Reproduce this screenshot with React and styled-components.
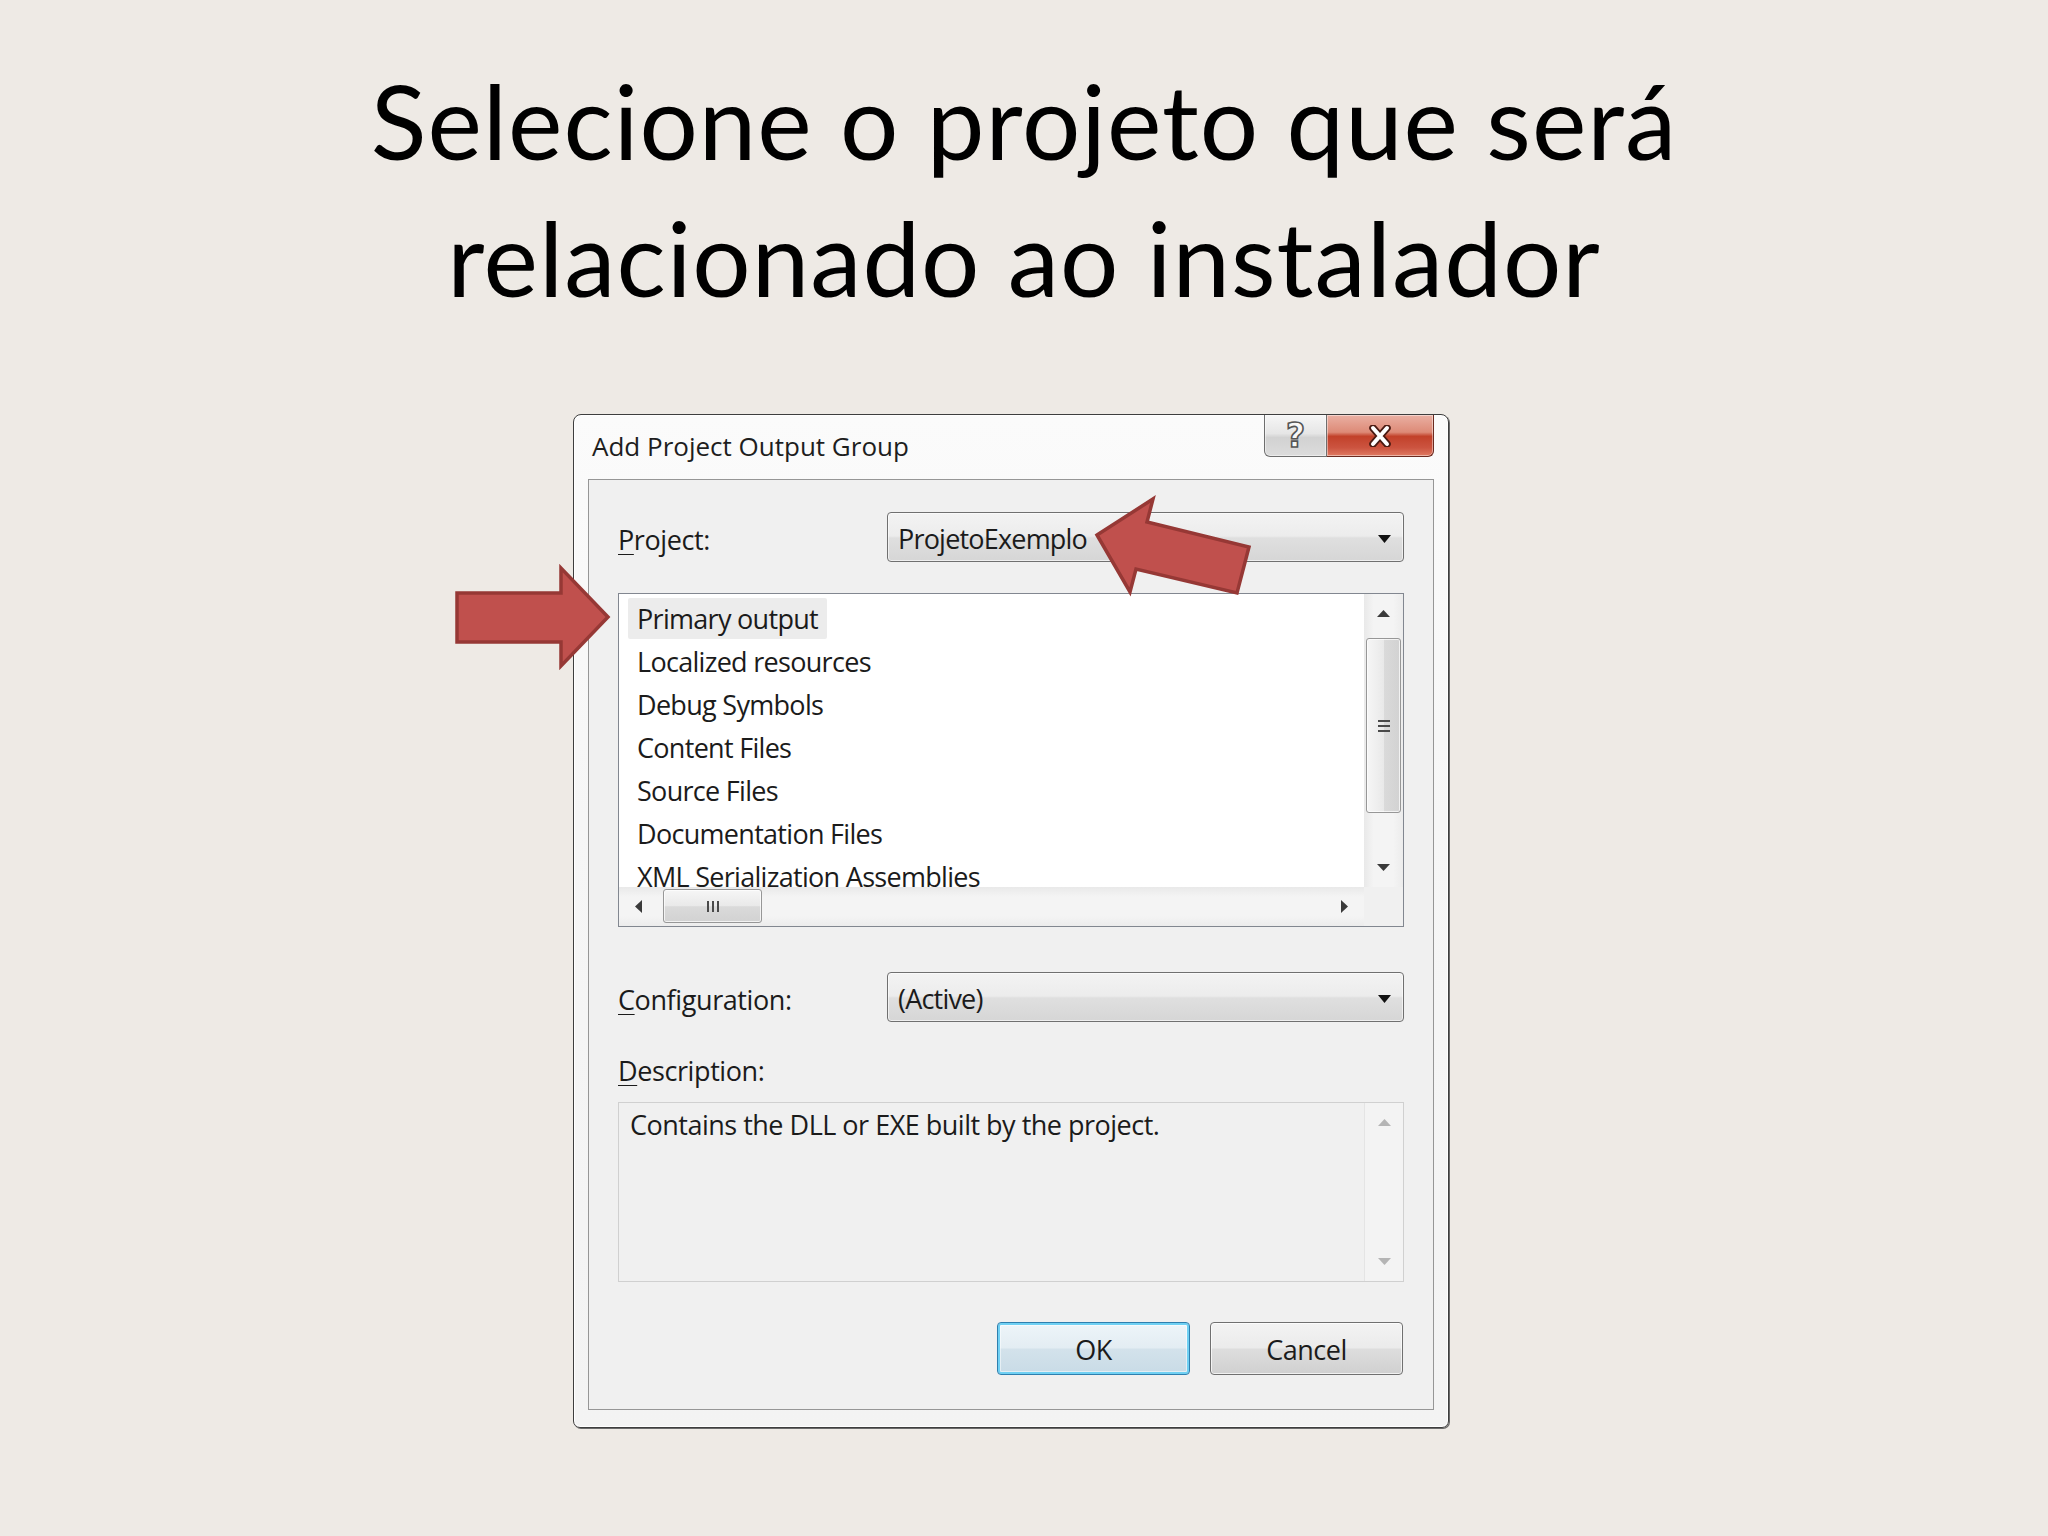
import React from "react";
import styled, { createGlobalStyle } from "styled-components";

const GlobalStyle = createGlobalStyle`
  html, body { margin: 0; padding: 0; background: #eeeae5; }
  * { box-sizing: border-box; }
`;

const Page = styled.div`
  position: relative;
  width: 2048px;
  height: 1536px;
  overflow: hidden;
  display: flex;
  flex-direction: column;
  background: #eeeae5;
`;

const Title = styled.h1`
  margin: 0;
  padding-top: 52px;
  font-family: Lato, "Open Sans", sans-serif;
  font-weight: 400;
  font-size: 103px;
  line-height: 137px;
  letter-spacing: 1px;
  text-align: center;
  color: #000;
`;

const Window = styled.div`
  margin-top: 88px;
  margin-left: 573px;
  width: 876px;
  height: 1014px;
  display: flex;
  flex-direction: column;
  border: 1px solid #3e3e3e;
  border-radius: 8px 8px 7px 7px;
  padding: 0 14px 17px 14px;
  background: linear-gradient(180deg, #fbfbfb 0%, #f6f6f6 40%, #f3f3f3 100%);
  box-shadow: inset 0 0 0 1px #ffffff, 1px 1px 0 #6a6a6a;
  font-family: "Open Sans", "Noto Sans", sans-serif;
  color: #1b1b1b;
`;

const TitleBar = styled.div`
  height: 64px;
  display: flex;
  justify-content: space-between;
  align-items: flex-start;
`;

const TitleText = styled.div`
  margin-top: 18px;
  padding-left: 4px;
  font-size: 26px;
  line-height: 26px;
  letter-spacing: 0px;
  color: #1e1e1e;
`;

const CaptionGroup = styled.div`
  display: flex;
  height: 42px;
`;

const CaptionButton = styled.div`
  height: 42px;
  width: ${(p) => p.$w}px;
  display: flex;
  align-items: center;
  justify-content: center;
  border: 1px solid ${(p) => (p.$close ? "#6b2a20" : "#6e6e6e")};
  border-top: none;
  ${(p) => (p.$close ? "border-left: none;" : "")}
  border-radius: ${(p) => (p.$close ? "0 0 6px 0" : "0 0 0 6px")};
  background: ${(p) =>
    p.$close
      ? "linear-gradient(180deg, #eab0a3 0%, #dd8a77 42%, #c2412a 52%, #cc5440 80%, #e07a62 100%)"
      : "linear-gradient(180deg, #f6f6f6 0%, #e6e6e6 45%, #d2d2d2 55%, #dcdcdc 100%)"};
  box-shadow: inset 0 0 0 1px rgba(255,255,255,0.45);
`;

const HelpGlyph = styled.span`
  font-family: "DejaVu Sans", sans-serif;
  font-weight: 700;
  font-size: 33px;
  line-height: 33px;
  color: #f7f7f7;
  -webkit-text-stroke: 1.6px #555;
`;

const Client = styled.div`
  flex: 1;
  display: flex;
  flex-direction: column;
  border: 1px solid #969696;
  background: #f0f0f0;
  padding: 32px 29px 34px 29px;
  font-size: 27px;
`;

const FieldRow = styled.div`
  display: flex;
  align-items: flex-start;
  height: 50px;
  margin-top: ${(p) => p.$mt || 0}px;
`;

const Label = styled.div`
  width: 269px;
  flex: none;
  margin-top: 10px;
  line-height: 36px;
  letter-spacing: -0.4px;
`;

const Key = styled.span`
  text-decoration: underline;
  text-underline-offset: 4px;
  text-decoration-thickness: 1px;
`;

const Combo = styled.div`
  flex: 1;
  height: 50px;
  display: flex;
  align-items: flex-start;
  justify-content: space-between;
  padding: 4px 12px 0 10px;
  border: 1px solid #707070;
  border-radius: 4px;
  background: linear-gradient(180deg, #f3f3f3 0%, #ececec 48%, #dfdfdf 52%, #d6d6d6 100%);
  box-shadow: inset 0 0 0 1px rgba(255,255,255,0.6);
`;

const ComboText = styled.span`
  line-height: 44px;
  letter-spacing: -0.8px;
`;

const DropArrow = styled.svg`
  margin-top: 18px;
`;

const ListBox = styled.div`
  margin-top: 31px;
  height: 334px;
  display: grid;
  grid-template-columns: 1fr 39px;
  grid-template-rows: 1fr 39px;
  border: 1px solid #828790;
  background: #ffffff;
`;

const ListItems = styled.div`
  overflow: hidden;
  padding: 3px 0 0 9px;
`;

const ListRow = styled.div`
  height: 43px;
`;

const ItemText = styled.span`
  display: inline-block;
  margin-top: 1px;
  padding: 0 9px;
  line-height: 41px;
  letter-spacing: -0.7px;
  border-radius: 2px;
  background: ${(p) => (p.$selected ? "#ececec" : "transparent")};
  white-space: nowrap;
`;

const VScroll = styled.div`
  display: flex;
  flex-direction: column;
  background: linear-gradient(90deg, #e9e9e9 0%, #f4f4f4 25%, #f4f4f4 75%, #ececec 100%);
`;

const HScroll = styled.div`
  display: flex;
  background: linear-gradient(180deg, #e9e9e9 0%, #f4f4f4 25%, #f4f4f4 75%, #ececec 100%);
`;

const ScrollBtn = styled.div`
  flex: none;
  width: 39px;
  height: 39px;
  display: flex;
  align-items: center;
  justify-content: center;
`;

const Track = styled.div`
  flex: 1;
  display: flex;
  flex-direction: ${(p) => (p.$horizontal ? "row" : "column")};
`;

const Thumb = styled.div`
  display: flex;
  align-items: center;
  justify-content: center;
  gap: 3px;
  flex-direction: ${(p) => (p.$horizontal ? "row" : "column")};
  ${(p) =>
    p.$horizontal
      ? `width: 99px; margin: 2px 0 3px 5px;
         background: linear-gradient(180deg, #f6f6f6 0%, #e9e9e9 50%, #dadada 52%, #d2d2d2 100%);`
      : `height: 175px; margin: 5px 2px 0 2px;
         background: linear-gradient(90deg, #f6f6f6 0%, #e9e9e9 50%, #dadada 52%, #d2d2d2 100%);`}
  border: 1px solid #979797;
  border-radius: 3px;
  box-shadow: inset 0 0 0 1px rgba(255,255,255,0.7);
`;

const GripLine = styled.span`
  display: block;
  background: #4a4a4a;
  ${(p) => (p.$horizontal ? "width: 2px; height: 11px;" : "width: 12px; height: 2px;")}
`;

const Corner = styled.div`
  background: #f0f0f0;
`;

const DescLabel = styled.div`
  margin-top: 31px;
  line-height: 36px;
  letter-spacing: -0.4px;
`;

const DescBox = styled.div`
  margin-top: 13px;
  height: 180px;
  display: grid;
  grid-template-columns: 1fr 39px;
  border: 1px solid #d0d0d0;
  background: #f0f0f0;
`;

const DescText = styled.div`
  padding: 4px 0 0 11px;
  line-height: 36px;
  letter-spacing: -0.5px;
`;

const DescScroll = styled.div`
  display: flex;
  flex-direction: column;
  justify-content: space-between;
  border-left: 1px solid #e4e4e4;
  background: #f3f3f3;
`;

const ButtonRow = styled.div`
  margin-top: auto;
  display: flex;
  justify-content: flex-end;
  gap: 20px;
  padding-right: 1px;
`;

const Button = styled.div`
  width: 193px;
  height: 53px;
  display: flex;
  align-items: center;
  justify-content: center;
  line-height: 51px;
  padding-top: 1px;
  letter-spacing: -0.5px;
  border-radius: 4px;
  border: 1px solid ${(p) => (p.$primary ? "#2f7fae" : "#707070")};
  background: ${(p) =>
    p.$primary
      ? "linear-gradient(180deg, #eef5f9 0%, #e3edf3 48%, #d3e2eb 52%, #c8dbe6 100%)"
      : "linear-gradient(180deg, #f3f3f3 0%, #ebebeb 48%, #dddddd 52%, #d0d0d0 100%)"};
  box-shadow: ${(p) =>
    p.$primary ? "inset 0 0 0 2px #6fd0f3, inset 0 0 0 3px rgba(255,255,255,0.5)" : "inset 0 0 0 1px rgba(255,255,255,0.7)"};
`;

const Overlay = styled.svg`
  position: absolute;
  left: 0;
  top: 0;
  pointer-events: none;
`;

const Tri = ({ dir, color = "#3a3a3a", w = 13, h = 7 }) => {
  const pts = {
    up: `0,${h} ${w},${h} ${w / 2},0`,
    down: `0,0 ${w},0 ${w / 2},${h}`,
    left: `${h},0 ${h},${w} 0,${w / 2}`,
    right: `0,0 0,${w} ${h},${w / 2}`,
  }[dir];
  const horiz = dir === "left" || dir === "right";
  return (
    <svg width={horiz ? h : w} height={horiz ? w : h}>
      <polygon points={pts} fill={color} />
    </svg>
  );
};

const items = [
  "Primary output",
  "Localized resources",
  "Debug Symbols",
  "Content Files",
  "Source Files",
  "Documentation Files",
  "XML Serialization Assemblies",
];

export default function App() {
  return (
    <Page>
      <GlobalStyle />
      <Title>
        Selecione o projeto que será
        <br />
        relacionado ao instalador
      </Title>

      <Window>
        <TitleBar>
          <TitleText>Add Project Output Group</TitleText>
          <CaptionGroup>
            <CaptionButton $w={63}>
              <HelpGlyph>?</HelpGlyph>
            </CaptionButton>
            <CaptionButton $w={107} $close>
              <svg width="26" height="22" viewBox="0 0 26 22">
                <path d="M6 3 L20 19 M20 3 L6 19" stroke="#4a1a12" strokeWidth="7.5" strokeLinecap="round" />
                <path d="M6 3 L20 19 M20 3 L6 19" stroke="#ffffff" strokeWidth="4" strokeLinecap="round" />
              </svg>
            </CaptionButton>
          </CaptionGroup>
        </TitleBar>

        <Client>
          <FieldRow>
            <Label>
              <Key>P</Key>roject:
            </Label>
            <Combo>
              <ComboText>ProjetoExemplo</ComboText>
              <DropArrow width="13" height="8">
                <polygon points="0,0 13,0 6.5,8" fill="#111" />
              </DropArrow>
            </Combo>
          </FieldRow>

          <ListBox>
            <ListItems>
              {items.map((t, i) => (
                <ListRow key={t}>
                  <ItemText $selected={i === 0}>{t}</ItemText>
                </ListRow>
              ))}
            </ListItems>
            <VScroll>
              <ScrollBtn>
                <Tri dir="up" />
              </ScrollBtn>
              <Track>
                <Thumb>
                  <GripLine />
                  <GripLine />
                  <GripLine />
                </Thumb>
              </Track>
              <ScrollBtn>
                <Tri dir="down" />
              </ScrollBtn>
            </VScroll>
            <HScroll>
              <ScrollBtn>
                <Tri dir="left" />
              </ScrollBtn>
              <Track $horizontal>
                <Thumb $horizontal>
                  <GripLine $horizontal />
                  <GripLine $horizontal />
                  <GripLine $horizontal />
                </Thumb>
              </Track>
              <ScrollBtn>
                <Tri dir="right" />
              </ScrollBtn>
            </HScroll>
            <Corner />
          </ListBox>

          <FieldRow $mt={45}>
            <Label>
              <Key>C</Key>onfiguration:
            </Label>
            <Combo>
              <ComboText>(Active)</ComboText>
              <DropArrow width="13" height="8">
                <polygon points="0,0 13,0 6.5,8" fill="#111" />
              </DropArrow>
            </Combo>
          </FieldRow>

          <DescLabel>
            <Key>D</Key>escription:
          </DescLabel>
          <DescBox>
            <DescText>Contains the DLL or EXE built by the project.</DescText>
            <DescScroll>
              <ScrollBtn>
                <Tri dir="up" color="#b4b4b4" />
              </ScrollBtn>
              <ScrollBtn>
                <Tri dir="down" color="#b4b4b4" />
              </ScrollBtn>
            </DescScroll>
          </DescBox>

          <ButtonRow>
            <Button $primary>OK</Button>
            <Button>Cancel</Button>
          </ButtonRow>
        </Client>
      </Window>

      <Overlay width="2048" height="1536" viewBox="0 0 2048 1536">
        <polygon
          points="457,593 561,593 561,568 608,617 561,666 561,642 457,642"
          fill="#c0504d"
          stroke="#963835"
          strokeWidth="3.5"
          strokeLinejoin="miter"
        />
        <polygon
          points="1097,535 1153,499 1147,522 1249,547 1237,593 1136,569 1130,592"
          fill="#c0504d"
          stroke="#963835"
          strokeWidth="3.5"
          strokeLinejoin="miter"
        />
      </Overlay>
    </Page>
  );
}
